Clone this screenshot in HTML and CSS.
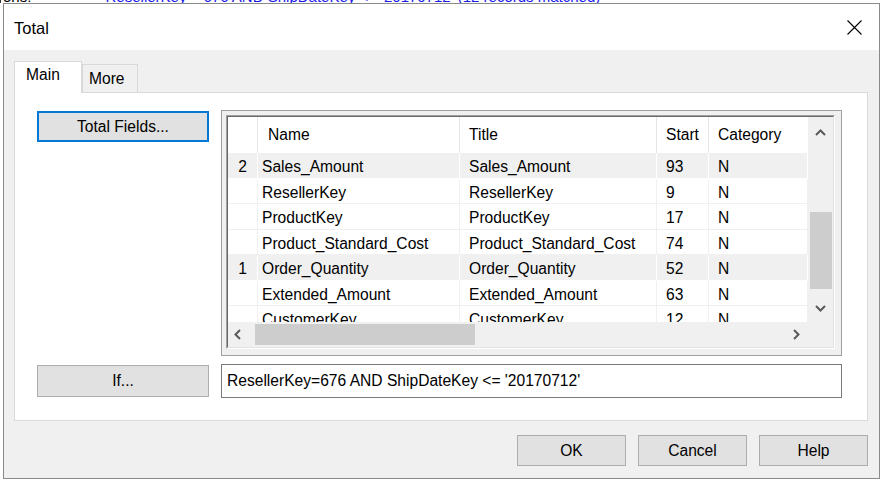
FILE: index.html
```html
<!DOCTYPE html>
<html lang="en">
<head>
<meta charset="utf-8">
<title>Total</title>
<link rel="stylesheet" href="styles.css">
</head>
<body>
<div class="backdrop"><p class="backdrop-text"><span class="bd-label">ons:</span> <span class="bd-link">ResellerKey = 676 AND ShipDateKey &lt;= '20170712' (12 records matched)</span></p></div>
<div class="window">
  <div class="titlebar">
    <span class="title">Total</span>
    <svg class="close" width="15" height="15" viewBox="0 0 15 15"><path d="M0.5 0.5 L14.5 14.5 M14.5 0.5 L0.5 14.5" stroke="#000" stroke-width="1.1" fill="none"/></svg>
  </div>
  <div class="body">
    <div class="tabs">
      <div class="tab active">Main</div>
      <div class="tab">More</div>
    </div>
    <div class="panel">
      <div class="panel-grid">
        <button class="btn focused">Total Fields...</button>
        <div class="frame">
          <div class="well">
            <div class="gridbox">
              <div class="table">
                <div class="row header">
                  <div class="cell num"></div>
                  <div class="cell name">Name</div>
                  <div class="cell title-c">Title</div>
                  <div class="cell start">Start</div>
                  <div class="cell cat">Category</div>
                </div>
                <div class="row sel">
                  <div class="cell num">2</div>
                  <div class="cell name">Sales_Amount</div>
                  <div class="cell title-c">Sales_Amount</div>
                  <div class="cell start">93</div>
                  <div class="cell cat">N</div>
                </div>
                <div class="row">
                  <div class="cell num"></div>
                  <div class="cell name">ResellerKey</div>
                  <div class="cell title-c">ResellerKey</div>
                  <div class="cell start">9</div>
                  <div class="cell cat">N</div>
                </div>
                <div class="row">
                  <div class="cell num"></div>
                  <div class="cell name">ProductKey</div>
                  <div class="cell title-c">ProductKey</div>
                  <div class="cell start">17</div>
                  <div class="cell cat">N</div>
                </div>
                <div class="row">
                  <div class="cell num"></div>
                  <div class="cell name">Product_Standard_Cost</div>
                  <div class="cell title-c">Product_Standard_Cost</div>
                  <div class="cell start">74</div>
                  <div class="cell cat">N</div>
                </div>
                <div class="row sel">
                  <div class="cell num">1</div>
                  <div class="cell name">Order_Quantity</div>
                  <div class="cell title-c">Order_Quantity</div>
                  <div class="cell start">52</div>
                  <div class="cell cat">N</div>
                </div>
                <div class="row">
                  <div class="cell num"></div>
                  <div class="cell name">Extended_Amount</div>
                  <div class="cell title-c">Extended_Amount</div>
                  <div class="cell start">63</div>
                  <div class="cell cat">N</div>
                </div>
                <div class="row">
                  <div class="cell num"></div>
                  <div class="cell name">CustomerKey</div>
                  <div class="cell title-c">CustomerKey</div>
                  <div class="cell start">12</div>
                  <div class="cell cat">N</div>
                </div>
              </div>
              <div class="vscroll">
                <svg class="arrow" width="11" height="7" viewBox="0 0 11 7"><polyline points="1,6 5.5,1.5 10,6" fill="none" stroke="#5a5a5a" stroke-width="2"/></svg>
                <div class="vtrack"><div class="vthumb"></div></div>
                <svg class="arrow" width="11" height="7" viewBox="0 0 11 7"><polyline points="1,1 5.5,5.5 10,1" fill="none" stroke="#5a5a5a" stroke-width="2"/></svg>
              </div>
              <div class="hscroll">
                <svg class="arrow" width="7" height="11" viewBox="0 0 7 11"><polyline points="6,1 1.5,5.5 6,10" fill="none" stroke="#5a5a5a" stroke-width="2"/></svg>
                <div class="htrack"><div class="hthumb"></div></div>
                <svg class="arrow" width="7" height="11" viewBox="0 0 7 11"><polyline points="1,1 5.5,5.5 1,10" fill="none" stroke="#5a5a5a" stroke-width="2"/></svg>
              </div>
              <div class="corner"></div>
            </div>
          </div>
        </div>
        <button class="btn if-btn">If...</button>
        <div class="textbox">ResellerKey=676 AND ShipDateKey &lt;= '20170712'</div>
      </div>
    </div>
    <div class="actions">
      <button class="btn action">OK</button>
      <button class="btn action">Cancel</button>
      <button class="btn action">Help</button>
    </div>
  </div>
</div>
</body>
</html>
```

FILE: styles.css
```css
* { box-sizing: border-box; }

html, body {
  margin: 0;
  padding: 0;
  background: #ffffff;
  overflow: hidden;
}

body {
  width: 883px;
  height: 482px;
  font-family: "Liberation Sans", Arial, sans-serif;
  font-size: 15.6px;
  color: #000;
}

.backdrop {
  height: 3px;
  overflow: hidden;
  border-left: 1px solid #333;
}

.backdrop-text {
  margin: -11px 0 0 0;
  padding-left: 2px;
  font-size: 15px;
  line-height: 16px;
  white-space: nowrap;
}

.bd-label { color: #000; }

.bd-link {
  color: #1a1aee;
  margin-left: 70px;
  text-decoration: underline;
}

.window {
  margin-left: 3px;
  width: 877px;
  height: 476px;
  border: 1px solid #8a8a8a;
  background: #f0f0f0;
  display: flex;
  flex-direction: column;
}

.titlebar {
  height: 46px;
  flex: none;
  background: #fff;
  display: flex;
  align-items: center;
  justify-content: space-between;
  padding: 2px 17px 0 10px;
}

.title {
  font-size: 16.5px;
}

.close { display: block; margin-top: -2px; }

.body {
  flex: 1;
  padding: 11px 10px 0 10px;
  display: flex;
  flex-direction: column;
}

.tabs {
  display: flex;
  align-items: flex-end;
  height: 31px;
  position: relative;
  z-index: 1;
}

.tab {
  height: 28px;
  width: 56px;
  border: 1px solid #d9d9d9;
  border-bottom: none;
  background: #f0f0f0;
  padding: 5px 0 0 6px;
  font-size: 15.6px;
}

.tab.active {
  height: 32px;
  width: 68px;
  margin-bottom: -1px;
  background: #fff;
  padding: 4px 0 0 11px;
}

.panel {
  width: 854px;
  height: 329px;
  background: #fff;
  border: 1px solid #d9d9d9;
  padding: 17px 0 0 22px;
}

.panel-grid {
  display: grid;
  grid-template-columns: 172px 621px;
  column-gap: 12px;
  row-gap: 8px;
  align-items: start;
}

.btn {
  font-family: inherit;
  font-size: 15.6px;
  color: #000;
  background: #e1e1e1;
  border: 1px solid #adadad;
  padding: 0;
  margin: 0;
  height: 31px;
}

.btn.focused {
  border: 2px solid #0078d7;
  margin-top: 1px;
}

.if-btn {
  height: 32px;
  margin-top: 1px;
}

.frame {
  width: 621px;
  height: 246px;
  border: 1px solid #a0a0a0;
  background: #f0f0f0;
  padding: 4px 6px 6px 4px;
}

.well {
  border: 1px solid;
  border-color: #a0a0a0 #ffffff #ffffff #a0a0a0;
}

.gridbox {
  border: 1px solid;
  border-color: #696969 #e3e3e3 #e3e3e3 #696969;
  display: grid;
  grid-template-columns: 580px 25px;
  grid-template-rows: 205px 25px;
  background: #fff;
}

.table {
  overflow: hidden;
  background: #fff;
}

.row {
  display: grid;
  grid-template-columns: 30px 202px 197px 52px 99px;
  grid-template-rows: 25.5px;
  height: 25.5px;
  line-height: 28px;
}

.row.header {
  grid-template-rows: 36px;
  height: 36px;
  line-height: 36px;
}

.cell {
  white-space: nowrap;
  overflow: hidden;
  border-right: 1px solid #f0f0f0;
  border-bottom: 1px solid #f0f0f0;
  padding-left: 9px;
}

.row.header .cell {
  border-bottom: none;
  border-right-color: #e5e5e5;
}

.row.header .cell.cat { border-right: none; }

.row.header .cell.name { padding-left: 10px; }

.cell.num {
  padding-left: 0;
  text-align: center;
}

.cell.name { padding-left: 4px; }

.row.sel .cell {
  background: #f0f0f0;
  border-color: #fff;
}

.vscroll {
  grid-row: 1;
  grid-column: 2;
  background: #f0f0f0;
  display: flex;
  flex-direction: column;
  align-items: center;
  padding: 12px 0 10px 0;
}

.vtrack {
  flex: 1;
  align-self: stretch;
  padding: 76px 0 0 2px;
}

.vthumb {
  width: 22px;
  height: 77px;
  background: #cdcdcd;
}

.hscroll {
  grid-row: 2;
  grid-column: 1;
  background: #f0f0f0;
  display: flex;
  align-items: center;
  padding: 0 8px 0 6px;
}

.htrack {
  flex: 1;
  align-self: stretch;
  padding: 2px 0 2px 14px;
}

.hthumb {
  width: 220px;
  height: 21px;
  background: #cdcdcd;
}

.arrow { display: block; flex: none; }

.corner {
  grid-row: 2;
  grid-column: 2;
  background: #f0f0f0;
}

.textbox {
  height: 34px;
  border: 1px solid #7a7a7a;
  background: #fff;
  line-height: 32px;
  padding-left: 5px;
  white-space: nowrap;
}

.actions {
  display: flex;
  justify-content: flex-end;
  gap: 12px;
  width: 854px;
  padding-top: 14px;
}

.btn.action {
  width: 109px;
}
```
